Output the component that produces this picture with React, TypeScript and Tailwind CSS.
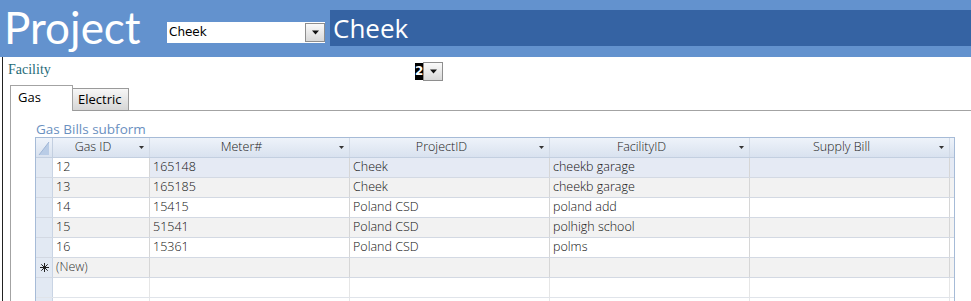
import React from "react";

const lato = { fontFamily: "Lato, 'Open Sans', sans-serif" };
const open = { fontFamily: "'Open Sans', Lato, sans-serif" };

function Arrow({ size = 7 }: { size?: number }) {
  return (
    <svg width={size} height={Math.ceil(size / 2) + 1} viewBox="0 0 7 4" className="block">
      <path d="M0 0 L7 0 L3.5 4 Z" fill="#111" />
    </svg>
  );
}

function DropButton({ h = 19 }: { h?: number }) {
  return (
    <div
      className="w-[20px] flex items-center justify-center border border-[#8e8e8e] bg-gradient-to-b from-[#fafafa] to-[#d9d9d9]"
      style={{ height: h }}
    >
      <Arrow />
    </div>
  );
}

function HeadArrow() {
  return (
    <svg width="5" height="3" viewBox="0 0 5 3" className="block">
      <path d="M0 0 L5 0 L2.5 3 Z" fill="#333" />
    </svg>
  );
}

function Star() {
  return (
    <svg width="9" height="9" viewBox="0 0 9 9" className="block">
      <g stroke="#222" strokeWidth="1">
        <path d="M4.5 0 V9" />
        <path d="M0 4.5 H9" />
        <path d="M1.3 1.3 L7.7 7.7" />
        <path d="M7.7 1.3 L1.3 7.7" />
      </g>
    </svg>
  );
}

const cols = [
  { name: "Gas ID", w: "w-[97px]" },
  { name: "Meter#", w: "w-[200px]" },
  { name: "ProjectID", w: "w-[200px]" },
  { name: "FacilityID", w: "w-[200px]" },
  { name: "Supply Bill", w: "w-[200px]" },
];

const rows = [
  ["12", "165148", "Cheek", "cheekb garage", ""],
  ["13", "165185", "Cheek", "cheekb garage", ""],
  ["14", "15415", "Poland CSD", "poland add", ""],
  ["15", "51541", "Poland CSD", "polhigh school", ""],
  ["16", "15361", "Poland CSD", "polms", ""],
];

export default function App() {
  return (
    <div className="w-[971px] h-[301px] bg-white overflow-hidden" style={open}>
      {/* Header */}
      <div className="h-[57px] shrink-0 bg-[#6392ce] flex items-center">
        <div className="w-[167px] pl-[4px] h-full flex items-center">
          <span className="text-white text-[44px] leading-none -mt-[4px]" style={lato}>
            Project
          </span>
        </div>
        <div className="w-[158px] h-[21px] bg-white flex items-center justify-between mt-[7px]">
          <span
            className="pl-[2px] text-[12px] text-black"
            style={{ fontFamily: "'DejaVu Sans', sans-serif" }}
          >
            Cheek
          </span>
          <DropButton h={19} />
        </div>
        <div className="ml-[5px] flex-1 h-[36px] bg-[#3563a3] flex items-center -mt-[1px]">
          <span className="pl-[3px] text-white text-[26px] leading-none" style={open}>
            Cheek
          </span>
        </div>
      </div>

      {/* Body */}
      <div className="ml-[2px] h-[244px] border-l border-[#222] flex flex-col overflow-hidden">
        {/* Facility row */}
        <div className="h-[28px] shrink-0 flex items-start">
          <div
            className="w-[412px] pl-[5px] pt-[6px] text-[14px] leading-[14px] text-[#1f6b78]"
            style={{ fontFamily: "'Liberation Serif', serif" }}
          >
            Facility
          </div>
          <div className="flex items-start pt-[5px]">
            <div
              className="w-[8px] h-[17px] mt-[1px] bg-black text-white text-[12px] leading-[17px] font-bold"
              style={{ fontFamily: "'DejaVu Sans', sans-serif" }}
            >
              2
            </div>
            <DropButton h={19} />
          </div>
        </div>

        {/* Tabs */}
        <div className="flex items-end h-[26px] shrink-0 pl-[7px]">
          <div className="w-[63px] h-[26px] border border-b-0 border-[#a3a3a3] bg-white pl-[7px] pt-[3px] text-[13px] leading-[16px] text-black">
            Gas
          </div>
          <div className="w-[56px] h-[23px] border border-l-0 border-[#9a9a9a] bg-gradient-to-b from-[#f7f7f7] to-[#d6d6d6] pl-[5px] pt-[2px] text-[13px] leading-[16px] text-black">
            Electric
          </div>
          <div className="flex-1 border-b border-[#a3a3a3]" />
        </div>

        {/* Panel */}
        <div className="flex-1 shrink-0 ml-[7px] border-l border-[#a3a3a3] pl-[24px] pt-[11px]">
          <div className="pl-[1px] text-[13.5px] leading-[15px] text-[#6a90bf] h-[15px]">
            Gas Bills subform
          </div>
          <div className="w-[920px] border border-[#a6bbd7] text-[12.5px] text-[#111] font-[360]">
            {/* header */}
            <div className="flex h-[20px] bg-gradient-to-b from-[#eef3fa] to-[#d9e2ef] border-b border-[#c3cfe0]">
              <div className="w-[17px] border-r border-[#c3cfe0] relative overflow-hidden">
                <svg width="16" height="19" viewBox="0 0 16 19" className="absolute left-0 top-0">
                  <path d="M3 17 L13 4 L13 17 Z" fill="#b9cce6" />
                  <path d="M3 17 L13 4" stroke="#9fb6d6" strokeWidth="1" />
                </svg>
              </div>
              {cols.map((c) => (
                <div key={c.name} className={`${c.w} flex items-center border-r border-[#d2dae6]`}>
                  <span className="flex-1 text-center text-[#222] leading-none">{c.name}</span>
                  <span className="w-[16px] flex justify-center">
                    <HeadArrow />
                  </span>
                </div>
              ))}
            </div>
            {/* data rows */}
            {rows.map((r, i) => {
              const first = i === 0;
              const gray = i % 2 === 1;
              const rowBg = first ? "bg-[#e5eaf4]" : gray ? "bg-[#f2f2f2]" : "bg-white";
              return (
                <div key={i} className={`flex h-[20px] border-b border-[#d3d9e3] ${rowBg}`}>
                  <div className="w-[17px] border-r border-[#c9d4e4] bg-[#e2e9f3]" />
                  {r.map((v, j) => (
                    <div
                      key={j}
                      className={`${cols[j].w} border-r border-[#d6d6d6] pl-[3px] flex items-center leading-none ${
                        first && j === 0 ? "bg-white" : ""
                      }`}
                    >
                      {v}
                    </div>
                  ))}
                </div>
              );
            })}
            {/* new row */}
            <div className="flex h-[20px] border-b border-[#d3d9e3] bg-[#f2f2f2]">
              <div className="w-[17px] border-r border-[#c9d4e4] bg-[#e2e9f3] flex items-center justify-center">
                <Star />
              </div>
              {cols.map((c, j) => (
                <div
                  key={c.name}
                  className={`${c.w} border-r border-[#d6d6d6] pl-[3px] flex items-center leading-none text-[#333]`}
                >
                  {j === 0 ? "(New)" : ""}
                </div>
              ))}
            </div>
            {/* empty rows */}
            {[0, 1].map((k) => (
              <div key={k} className="flex h-[20px] border-b border-[#e0e4ea] bg-white">
                <div className="w-[17px] border-r border-[#c9d4e4] bg-[#e2e9f3]" />
                {cols.map((c) => (
                  <div key={c.name} className={`${c.w} border-r border-[#e6e6e6]`} />
                ))}
              </div>
            ))}
          </div>
        </div>
      </div>
    </div>
  );
}
